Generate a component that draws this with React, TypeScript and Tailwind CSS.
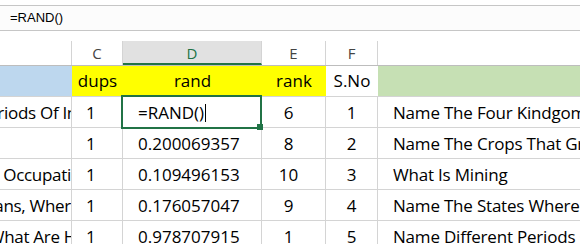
const GRID = 'border-[#d4d4d4]';

type Row = {
  b: string;
  bShift: string;
  c: string;
  d: string;
  e: string;
  f: string;
  g: string;
  editing?: boolean;
};

const rows: Row[] = [
  { b: 'Name Different Periods Of In', bShift: '-mr-[6px]', c: '1', d: '=RAND()', e: '6', f: '1', g: 'Name The Four Kindgoms Of Living Things', editing: true },
  { b: '', bShift: '', c: '1', d: '0.200069357', e: '8', f: '2', g: 'Name The Crops That Grow In Summer' },
  { b: 'Name Different Occupati', bShift: 'mr-0', c: '1', d: '0.109496153', e: '10', f: '3', g: 'What Is Mining' },
  { b: 'Name The Indians, Wher', bShift: 'mr-0', c: '1', d: '0.176057047', e: '9', f: '4', g: 'Name The States Where Mining Is Done' },
  { b: 'What Are H', bShift: '-mr-[5px]', c: '1', d: '0.978707915', e: '1', f: '5', g: 'Name Different Periods Of History' },
];

function HeaderCell({ label, width, active }: { label: string; width: string; active?: boolean }) {
  return (
    <div
      className={`${width} shrink-0 h-full border-r ${GRID} text-center text-[15px] leading-[24px] ${
        active ? 'bg-[#e1e1e1] border-b-2 border-b-[#217346] text-[#217346]' : 'text-[#444]'
      }`}
    >
      {label}
    </div>
  );
}

export default function App() {
  return (
    <div className="relative w-[580px] h-[244px] overflow-hidden bg-white font-['Open_Sans',sans-serif] text-black">
      <div className="h-[5px]" />

      {/* formula bar */}
      <div className="h-[26px] border-y border-[#c6c6c6] bg-[#fcfcfc] pl-[10px] font-['Liberation_Sans',Arial,sans-serif] text-[13px] leading-[24px]">
        =RAND()
      </div>

      <div className="h-[10px]" />

      {/* column letters */}
      <div className="flex h-[25px] border-b border-[#bdbdbd]">
        <HeaderCell label="" width="w-[72px]" />
        <HeaderCell label="C" width="w-[51px]" />
        <HeaderCell label="D" width="w-[139px]" active />
        <HeaderCell label="E" width="w-[64px]" />
        <HeaderCell label="F" width="w-[52px]" />
        <div className="flex-1" />
      </div>

      {/* header row */}
      <div className={`flex h-[31px] border-b ${GRID} text-[17px] leading-[23px]`}>
        <div className="w-[72px] shrink-0 bg-[#bdd7ee]" />
        <div className="w-[51px] shrink-0 bg-[#ffff00] pt-[3px] text-center">dups</div>
        <div className="w-[139px] shrink-0 bg-[#ffff00] pt-[3px] text-center">rand</div>
        <div className="w-[64px] shrink-0 bg-[#ffff00] pt-[3px] text-center">rank</div>
        <div className="w-[52px] shrink-0 bg-white pt-[3px] text-center">S.No</div>
        <div className="flex-1 bg-[#c6e0b4]" />
      </div>

      {rows.map((r, i) => (
        <div key={i} className={`flex h-[31px] border-b ${GRID} text-[17px] leading-[23px] whitespace-nowrap`}>
          <div className={`w-[72px] shrink-0 flex justify-end overflow-hidden border-r ${GRID} pt-[4px] tracking-[-0.3px]`}>
            <span className={r.bShift}>{r.b}</span>
          </div>
          <div className={`w-[51px] shrink-0 border-r ${GRID} pt-[4px] pl-[14px]`}>{r.c}</div>
          <div className={`w-[139px] shrink-0 border-r ${GRID} pt-[4px] pl-[15px] flex items-start`}>
            <span>{r.d}</span>
            {r.editing && <span className="ml-[1px] mt-[3px] w-px h-[18px] bg-black" />}
          </div>
          <div className={`w-[64px] shrink-0 border-r ${GRID} pt-[4px] pr-[10px] text-center`}>{r.e}</div>
          <div className={`w-[52px] shrink-0 border-r ${GRID} pt-[4px] text-center`}>{r.f}</div>
          <div className="flex-1 overflow-hidden pt-[4px] pl-[15px] tracking-[-0.2px]">{r.g}</div>
        </div>
      ))}

      {/* active cell */}
      <div className="absolute left-[121px] top-[95px] w-[141px] h-[34px] border-2 border-[#217346]" />
      <div className="absolute left-[257px] top-[124px] w-[6px] h-[6px] bg-[#217346]" />
    </div>
  );
}
